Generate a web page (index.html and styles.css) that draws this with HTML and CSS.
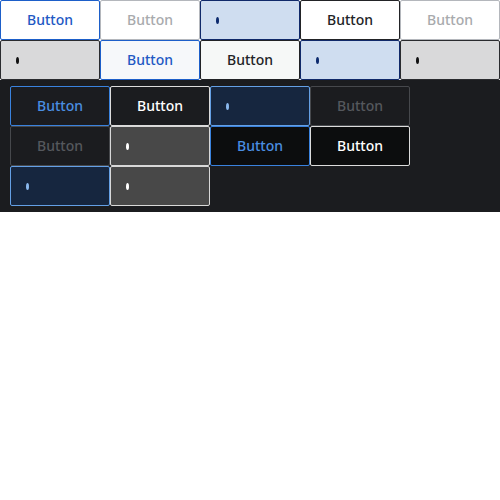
FILE: index.html
```html
<!DOCTYPE html>
<html>
<head>
<meta charset="utf-8">
<link rel="stylesheet" href="styles.css">
</head>
<body>
<div class="light">
  <button class="btn l-primary">Button</button>
  <button class="btn l-disabled">Button</button>
  <button class="btn l-sel icon"><span class="dot"></span></button>
  <button class="btn l-default">Button</button>
  <button class="btn l-disabled">Button</button>
  <button class="btn l-gray icon"><span class="dot"></span></button>
  <button class="btn l-primary alt">Button</button>
  <button class="btn l-default alt">Button</button>
  <button class="btn l-sel icon"><span class="dot"></span></button>
  <button class="btn l-gray icon"><span class="dot"></span></button>
</div>
<div class="dark">
  <div class="dgrid">
    <button class="btn d-primary">Button</button>
    <button class="btn d-default">Button</button>
    <button class="btn d-sel icon"><span class="dot"></span></button>
    <button class="btn d-disabled">Button</button>
    <button class="btn d-disabled">Button</button>
    <button class="btn d-gray icon"><span class="dot"></span></button>
    <button class="btn d-primary alt">Button</button>
    <button class="btn d-default alt">Button</button>
    <button class="btn d-sel icon"><span class="dot"></span></button>
    <button class="btn d-gray icon"><span class="dot"></span></button>
  </div>
</div>
</body>
</html>
```
FILE: styles.css
```css
html, body {
  margin: 0;
  padding: 0;
  background: #ffffff;
}
body {
  font-family: "Noto Sans", "Open Sans", sans-serif;
}
.light {
  display: grid;
  grid-template-columns: repeat(5, 100px);
  grid-auto-rows: 40px;
}
.dark {
  background: #1b1c1f;
  padding: 6px 10px;
}
.dgrid {
  display: grid;
  grid-template-columns: repeat(4, 100px);
  grid-auto-rows: 40px;
}
.btn {
  box-sizing: border-box;
  width: 100px;
  height: 40px;
  margin: 0;
  padding: 0 0 2px 0;
  border: 1px solid;
  border-radius: 2px;
  font-family: "Noto Sans", "Open Sans", sans-serif;
  font-size: 14px;
  font-weight: 500;
  display: flex;
  align-items: center;
  justify-content: center;
}
.btn.icon {
  justify-content: flex-start;
  padding: 0 0 0 15px;
}
.dot {
  display: block;
  width: 3px;
  height: 7px;
  border-radius: 50%;
  background: currentColor;
}
.l-primary { background: #ffffff; border-color: #1d5fc9; color: #2258c4; }
.l-primary.alt { background: #f6f8fa; }
.l-disabled { background: #ffffff; border-color: #b4b7bc; color: #a8aaad; }
.l-sel { background: #cfddf0; border-color: #10296a; color: #0d2a6e; }
.l-default { background: #ffffff; border-color: #222326; color: #222326; }
.l-default.alt { background: #f6f8f7; }
.l-gray { background: #d9d9da; border-color: #2a2b2e; color: #111111; }

.d-primary { background: #1b1c20; border-color: #3a82de; color: #4a8ee2; }
.d-primary.alt { background: #0c0d0e; }
.d-default { background: #1b1c1f; border-color: #dcdcdc; color: #ffffff; }
.d-default.alt { background: #0c0d0e; }
.d-sel { background: #16263f; border-color: #64a0e6; color: #8ab8ee; }
.d-disabled { background: #1b1c1f; border-color: #46484c; color: #55585d; }
.d-gray { background: #484848; border-color: #d8d8d8; color: #ffffff; }
```
